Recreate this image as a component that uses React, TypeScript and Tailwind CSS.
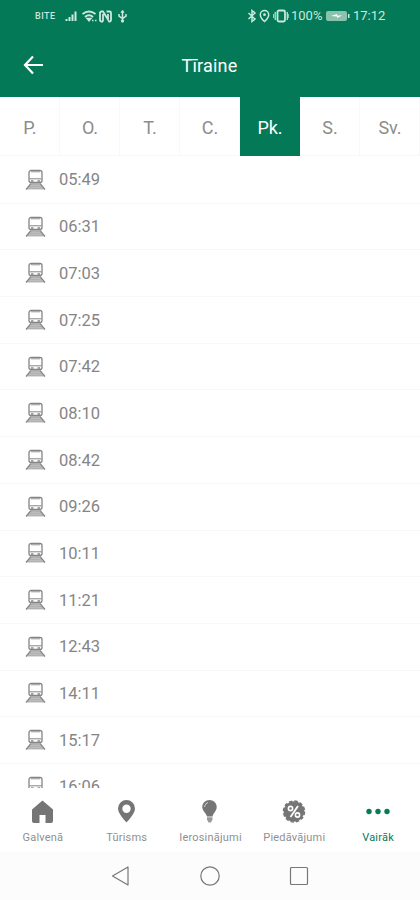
import type { ReactNode } from "react";

const days = ["P.", "O.", "T.", "C.", "Pk.", "S.", "Sv."];
const activeDay = "Pk.";

const departures = [
  "05:49",
  "06:31",
  "07:03",
  "07:25",
  "07:42",
  "08:10",
  "08:42",
  "09:26",
  "10:11",
  "11:21",
  "12:43",
  "14:11",
  "15:17",
  "16:06",
];

function StatusBar() {
  return (
    <div className="flex h-8 items-center justify-between pl-[35px] pr-[34px] text-[#cbe8dd]">
      <div className="flex items-center">
        <span className="w-[22px] pt-px text-[9px] font-medium tracking-[0.5px]">BITE</span>
        <svg className="ml-2" width="64" height="14" viewBox="0 0 64 14" fill="none" stroke="currentColor">
          {/* Signal */}
          <path d="M1.500 12v-2M4.500 12V8M7.500 12V5.500M10.500 12V2.500" strokeWidth="2" />
          {/* Wi-Fi */}
          <path d="M17.500 5q6.500-5 13 0M20 8q4-3.500 8 0" strokeWidth="1.900" />
          <path d="M22 9.500h4l-2 2.500zM27 11.500h1.500M30 11.500h1.500" fill="currentColor" strokeWidth="1.400" />
          {/* NFC */}
          <path d="M38 12.500h-1.500a1.500 1.500 0 0 1-1.500-1.500V4a1.500 1.500 0 0 1 1.500-1.500H38l5 8V5M38 12.500V5M41.500 2.500h3A1.500 1.500 0 0 1 46 4v7a1.500 1.500 0 0 1-1.500 1.500h-1" strokeWidth="1.800" />
          {/* USB */}
          <path d="M57.500 2v10.500M54 5v2l3.500 2.500L61 7V5" strokeWidth="1.500" />
          <path d="M55.800 3.500l1.700-2.500 1.700 2.500z" fill="currentColor" strokeWidth=".5" />
          <circle cx="57.500" cy="12" r="1.200" fill="currentColor" />
        </svg>
      </div>
      <div className="flex items-center">
        <svg width="43" height="16" viewBox="0 0 43 16" fill="none" stroke="currentColor" strokeWidth="1.500">
          <path d="M2.500 5l6.500 6-3 2.500v-11L9 5l-6.500 6" />
          <path d="M18.500 2.500a4.200 4.200 0 0 1 4.200 4.200c0 3-4.200 6.800-4.200 6.800s-4.200-3.800-4.200-6.800a4.200 4.200 0 0 1 4.200-4.200z" />
          <circle cx="18.500" cy="6.700" r="1.400" fill="currentColor" stroke="none" />
          <rect x="31.500" y="2.500" width="7.500" height="11" rx="1.500" strokeWidth="1.800" />
          <path d="M29.200 4v8M41.300 4v8" strokeWidth="1.200" />
          <path d="M27.500 6v4M42.700 6v4" strokeWidth=".8" />
        </svg>
        <span className="ml-[2px] w-[32px] text-[13px]">100%</span>
        <svg className="ml-[3px]" width="24" height="12" viewBox="0 0 24 12">
          <rect x="0" y="1" width="21" height="10" rx="2" fill="#8bc2ad" />
          <path d="M22 4h1.500v4H22z" fill="currentColor" />
          <path d="M5 6l6-2v1.500h5L11 8V6.500z" fill="#fff" />
        </svg>
        <span className="ml-[3px] w-[33px] text-[13px]">17:12</span>
      </div>
    </div>
  );
}

function Header() {
  return (
    <header className="grid h-[65px] grid-cols-[1fr_auto_1fr] items-center text-white">
      <svg className="ml-[23px]" width="21" height="20" viewBox="0 0 21 20" fill="none" stroke="currentColor" strokeWidth="2.200">
        <path d="M10 1.500L2 10l8 8.500M2 10h18" />
      </svg>
      <h1 className="pr-px pt-px text-[18px] tracking-[0.2px]">Tīraine</h1>
    </header>
  );
}

function TrainIcon() {
  return (
    <svg width="22" height="22" viewBox="0 0 22 22" fill="none" stroke="#858585">
      <path d="M6.500 14L1 20.500h19L14.500 14z" fill="#bdbdbd" stroke="none" />
      <path d="M6 14.500L1 20.500M15 14.500l5 6" strokeWidth="1.200" />
      <path d="M5.500 15.500h10M4 17.500h13M2.500 19.500h16" strokeWidth=".5" stroke="#a5a5a5" />
      <rect x="4" y="1.500" width="13" height="12" rx="2" fill="#fff" strokeWidth="1.300" />
      <path d="M6 2.800h9" strokeWidth=".8" />
      <path d="M4.500 9.800h12" />
      <path d="M6 12h2.500M12.500 12H15" strokeWidth="1.300" />
    </svg>
  );
}

function NavItem({ label, active, children }: { label: string; active?: boolean; children: ReactNode }) {
  return (
    <div className={`flex w-[84px] flex-col items-center ${active ? "text-[#087a58]" : "text-[#757575]"}`}>
      <svg width="26" height="26" viewBox="0 0 26 26" fill="currentColor">
        {children}
      </svg>
      <span className={`mt-1.5 text-[11px] leading-4 tracking-[0.2px] ${active ? "" : "text-[#8f8f8f]"}`}>{label}</span>
    </div>
  );
}

function BottomNav() {
  return (
    <nav className="flex h-16 shrink-0 bg-white pl-px pt-[10px]">
      <NavItem label="Galvenā">
        <path d="M12.500 2.500l10.500 9V23a2 2 0 0 1-2 2h-5.500v-8h-6v8H4a2 2 0 0 1-2-2V11.500z" />
      </NavItem>
      <NavItem label="Tūrisms">
        <path fillRule="evenodd" d="M12.500 2a8.500 8.500 0 0 1 8.500 8.500C21 16 12.500 24.500 12.500 24.500S4 16 4 10.500A8.500 8.500 0 0 1 12.500 2zm0 4.500a4.200 4.200 0 1 0 0 8.400 4.200 4.200 0 0 0 0-8.400z" />
      </NavItem>
      <NavItem label="Ierosinājumi">
        <path d="M12.500 2c4 0 7.200 3 7.200 7 0 4-3.400 6-4.200 9.500h-5.500C9 15 5.300 13 5.300 9c0-4 3.200-7 7.200-7z" />
        <path d="M10 19.200h5.500v2L14 24.500h-2.500L10 21.500z" fill="#9a9a9a" />
        <path d="M7.500 9q.2-3.500 3.500-4.500" fill="none" stroke="#d0d0d0" strokeWidth="1" />
      </NavItem>
      <NavItem label="Piedāvājumi">
        <circle cx="13" cy="13.500" r="10.300" />
        <circle cx="13" cy="13.500" r="10.500" fill="none" stroke="currentColor" strokeWidth="1.500" strokeDasharray="3.500 2" />
        <path d="M9.500 19l7.500-11" stroke="#fff" strokeWidth="1.800" />
        <circle cx="9.500" cy="10.500" r="2.100" fill="none" stroke="#fff" strokeWidth="1.600" />
        <circle cx="16.500" cy="17" r="2.100" fill="none" stroke="#fff" strokeWidth="1.600" />
      </NavItem>
      <NavItem label="Vairāk" active>
        <circle cx="4" cy="13.500" r="2.700" />
        <circle cx="13" cy="13.500" r="2.700" />
        <circle cx="22" cy="13.500" r="2.700" />
      </NavItem>
    </nav>
  );
}

function SystemNav() {
  return (
    <div className="flex h-12 shrink-0 items-center justify-center gap-[67px] bg-[#fcfcfc] pr-px">
      <svg width="22" height="22" viewBox="0 0 22 22" fill="none" stroke="#777" strokeWidth="1.200">
        <path d="M18 2v18L2.500 11z" strokeLinejoin="round" />
      </svg>
      <svg width="22" height="22" viewBox="0 0 22 22" fill="none" stroke="#777" strokeWidth="1.200">
        <circle cx="11" cy="11" r="9.200" />
      </svg>
      <svg width="22" height="22" viewBox="0 0 22 22" fill="none" stroke="#777" strokeWidth="1.200">
        <rect x="2.500" y="2.500" width="17" height="17" rx="1" />
      </svg>
    </div>
  );
}

export default function App() {
  return (
    <div className="flex h-[900px] w-[420px] flex-col overflow-hidden bg-white font-['Roboto',sans-serif]">
      <div className="h-[97px] shrink-0 bg-[#047957]">
        <StatusBar />
        <Header />
      </div>

      {/* Weekday tabs */}
      <div className="flex h-[59px] shrink-0">
        {days.map((day) => (
          <div
            key={day}
            className={`flex w-[60px] shrink-0 items-center justify-center border-b border-r pl-px pt-0.5 text-[18px] ${
              day === activeDay
                ? "border-[#047957] bg-[#047957] text-white"
                : "border-[#f8f8f8] text-[#8c8c8c]"
            }`}
          >
            {day}
          </div>
        ))}
      </div>

      <main className="min-h-0 flex-1 overflow-hidden pt-px">
        {departures.map((time) => (
          <div
            key={time}
            className="flex h-[46.700px] items-center border-b border-[#f8f8f8] pl-[25px] text-[16.500px] text-[#858585]"
          >
            <TrainIcon />
            <span className="ml-3 pt-[2px]">{time}</span>
          </div>
        ))}
      </main>

      <BottomNav />
      <SystemNav />
    </div>
  );
}
